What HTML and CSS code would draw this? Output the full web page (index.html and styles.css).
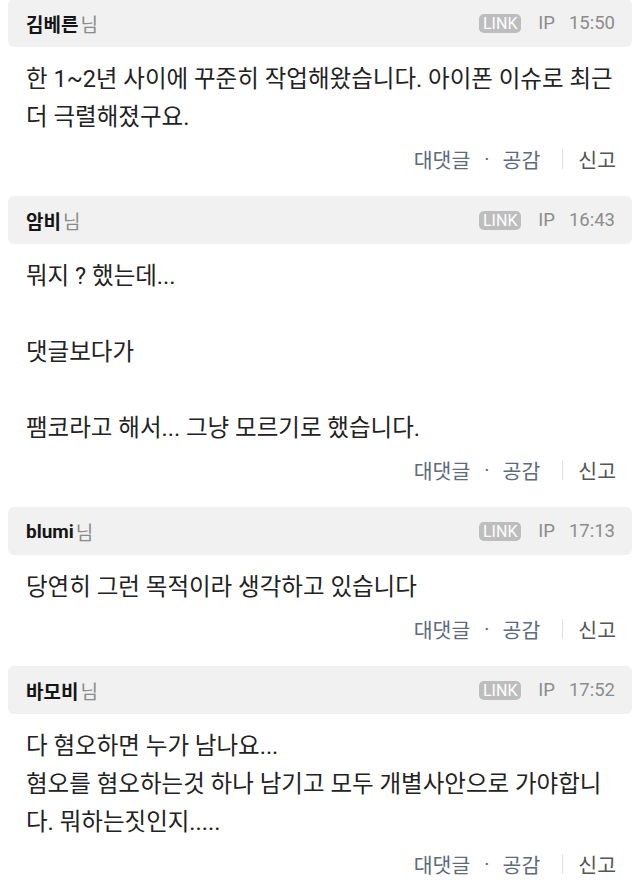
FILE: index.html
```html
<!DOCTYPE html>
<html lang="ko">
<head>
<meta charset="utf-8">
<title>댓글</title>
<link rel="stylesheet" href="styles.css">
</head>
<body>
<div class="list">
  <article class="comment">
    <div class="head">
      <span class="name">김베른</span><span class="nim">님</span>
      <span class="meta"><span class="link">LINK</span><span class="ip">IP</span><span class="time">15:50</span></span>
    </div>
    <div class="body">한 1~2년 사이에 꾸준히 작업해왔습니다. 아이폰 이슈로 최근 더 극렬해졌구요.</div>
    <div class="actions"><span class="act">대댓글</span><span class="dot">·</span><span class="act">공감</span><span class="sep"></span><span class="report">신고</span></div>
  </article>
  <article class="comment">
    <div class="head">
      <span class="name">암비</span><span class="nim">님</span>
      <span class="meta"><span class="link">LINK</span><span class="ip">IP</span><span class="time">16:43</span></span>
    </div>
    <div class="body">뭐지 ? 했는데...<br><br>댓글보다가<br><br>팸코라고 해서... 그냥 모르기로 했습니다.</div>
    <div class="actions"><span class="act">대댓글</span><span class="dot">·</span><span class="act">공감</span><span class="sep"></span><span class="report">신고</span></div>
  </article>
  <article class="comment">
    <div class="head">
      <span class="name">blumi</span><span class="nim">님</span>
      <span class="meta"><span class="link">LINK</span><span class="ip">IP</span><span class="time">17:13</span></span>
    </div>
    <div class="body">당연히 그런 목적이라 생각하고 있습니다</div>
    <div class="actions"><span class="act">대댓글</span><span class="dot">·</span><span class="act">공감</span><span class="sep"></span><span class="report">신고</span></div>
  </article>
  <article class="comment">
    <div class="head">
      <span class="name">바모비</span><span class="nim">님</span>
      <span class="meta"><span class="link">LINK</span><span class="ip">IP</span><span class="time">17:52</span></span>
    </div>
    <div class="body">다 혐오하면 누가 남나요...<br>혐오를 혐오하는것 하나 남기고 모두 개별사안으로 가야합니다. 뭐하는짓인지.....</div>
    <div class="actions"><span class="act">대댓글</span><span class="dot">·</span><span class="act">공감</span><span class="sep"></span><span class="report">신고</span></div>
  </article>
</div>
</body>
</html>
```

FILE: styles.css
```css
html, body {
  margin: 0;
  padding: 0;
  background: #ffffff;
}

body {
  font-family: Roboto, "Noto Sans CJK KR", "Noto Sans", sans-serif;
  color: #222222;
  overflow: hidden;
}

.list {
  display: flex;
  flex-direction: column;
  margin-top: -1px;
}

.comment {
  display: flex;
  flex-direction: column;
  margin-bottom: 25px;
}

.head {
  display: flex;
  align-items: center;
  height: 48px;
  margin: 0 8px;
  padding: 0 17px 0 18px;
  background: #f1f1f1;
  border-radius: 6px;
  box-sizing: border-box;
}

.name {
  font-size: 19px;
  font-weight: 700;
  color: #151515;
}

.nim {
  font-size: 19px;
  color: #8a8a8a;
  margin-left: 2px;
}

.meta {
  margin-left: auto;
  display: flex;
  align-items: center;
  font-size: 18.5px;
  color: #8c8c8c;
}

.link {
  display: inline-flex;
  align-items: center;
  justify-content: center;
  width: 42px;
  height: 19px;
  background: #bdbdbd;
  color: #ffffff;
  font-size: 16px;
  border-radius: 5px;
}

.ip {
  margin-left: 17px;
}

.time {
  margin-left: 14px;
}

.body {
  margin-top: 13px;
  padding: 0 14px 0 26px;
  font-size: 23.5px;
  line-height: 38px;
  color: #222222;
}

.actions {
  display: flex;
  align-items: center;
  justify-content: flex-end;
  height: 24px;
  margin-top: 11px;
  padding-right: 24px;
  font-size: 20.5px;
}

.act {
  color: #5d6b7b;
}

.dot {
  color: #666666;
  margin: 0 13px 0 14px;
  font-size: 20px;
}

.sep {
  width: 1px;
  height: 20px;
  background: #e2e2e2;
  margin: 0 15px 0 22px;
}

.report {
  color: #555555;
}
```
